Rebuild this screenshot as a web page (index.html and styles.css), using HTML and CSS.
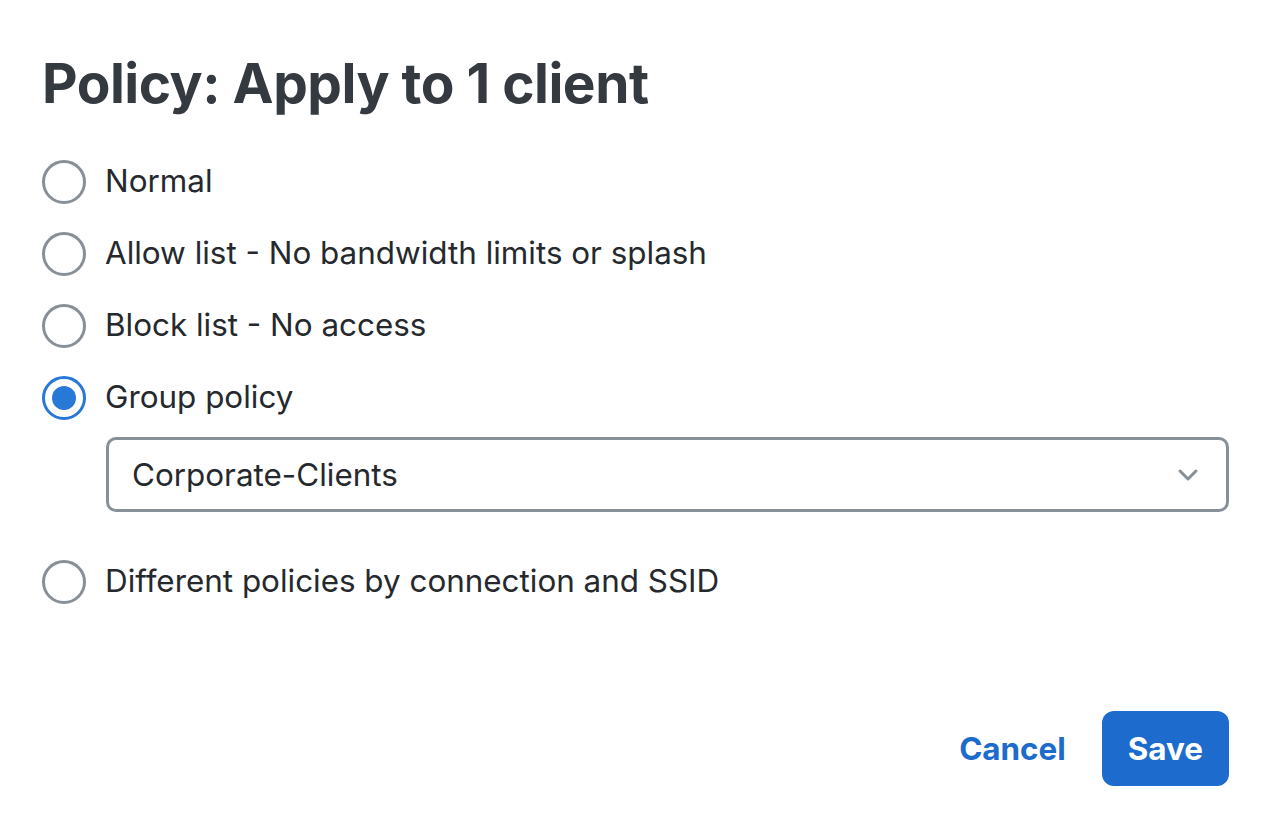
FILE: index.html
```html
<!DOCTYPE html>
<html lang="en">
<head>
    <meta charset="UTF-8">
    <meta name="viewport" content="width=device-width, initial-scale=1.0">
    <title>Policy</title>
    <link rel="stylesheet" href="styles.css">
</head>
<body>
    <div class="dialog">
        <h1>Policy: Apply to 1 client</h1>
        <div class="options">
            <label class="option">
                <span class="radio"></span>
                <span>Normal</span>
            </label>
            <label class="option">
                <span class="radio"></span>
                <span>Allow list - No bandwidth limits or splash</span>
            </label>
            <label class="option">
                <span class="radio"></span>
                <span>Block list - No access</span>
            </label>
            <label class="option">
                <span class="radio checked"></span>
                <span>Group policy</span>
            </label>
            <div class="select">
                <span>Corporate-Clients</span>
                <svg width="22" height="14" viewBox="0 0 22 14">
                    <path d="M3 3 L11 11 L19 3" fill="none" stroke="#868e96" stroke-width="3" stroke-linecap="round" stroke-linejoin="round"/>
                </svg>
            </div>
            <label class="option">
                <span class="radio"></span>
                <span>Different policies by connection and SSID</span>
            </label>
        </div>
        <div class="actions">
            <button class="link">Cancel</button>
            <button class="primary">Save</button>
        </div>
    </div>
</body>
</html>
```

FILE: styles.css
```css
body {
    margin: 0;
    font-family: Inter, "Noto Sans", sans-serif;
    color: #25292e;
    background: #fff;
}
.dialog {
    padding: 48px 51px 44px 42px;
}
h1 {
    margin: 0 0 28px;
    font-size: 55px;
    font-weight: 700;
    color: #343a40;
    letter-spacing: -0.5px;
    line-height: 70px;
}
.options {
    display: flex;
    flex-direction: column;
}
.option {
    display: flex;
    align-items: center;
    gap: 19px;
    height: 72px;
    font-size: 31.4px;
    line-height: 1;
}
.radio {
    flex: none;
    width: 44px;
    height: 44px;
    box-sizing: border-box;
    border: 3px solid #878f99;
    border-radius: 50%;
    display: flex;
    align-items: center;
    justify-content: center;
}
.radio.checked {
    border-color: #2878d8;
}
.radio.checked::after {
    content: "";
    width: 24px;
    height: 24px;
    border-radius: 50%;
    background: #2878d8;
}
.select {
    margin: 3px 0 34px 64px;
    height: 75px;
    box-sizing: border-box;
    border: 3px solid #878f99;
    border-radius: 10px;
    display: flex;
    align-items: center;
    justify-content: space-between;
    padding: 0 27px 0 23px;
    font-size: 31.4px;
}
.actions {
    display: flex;
    justify-content: flex-end;
    align-items: center;
    gap: 36px;
    margin-top: 93px;
}
button {
    font-family: inherit;
    font-size: 31.4px;
    font-weight: 700;
    border: none;
    cursor: pointer;
}
.link {
    background: none;
    color: #1d6bcc;
    padding: 0;
}
.primary {
    background: #1d6bcc;
    color: #fff;
    height: 75px;
    padding: 0 26px;
    border-radius: 12px;
}
```
